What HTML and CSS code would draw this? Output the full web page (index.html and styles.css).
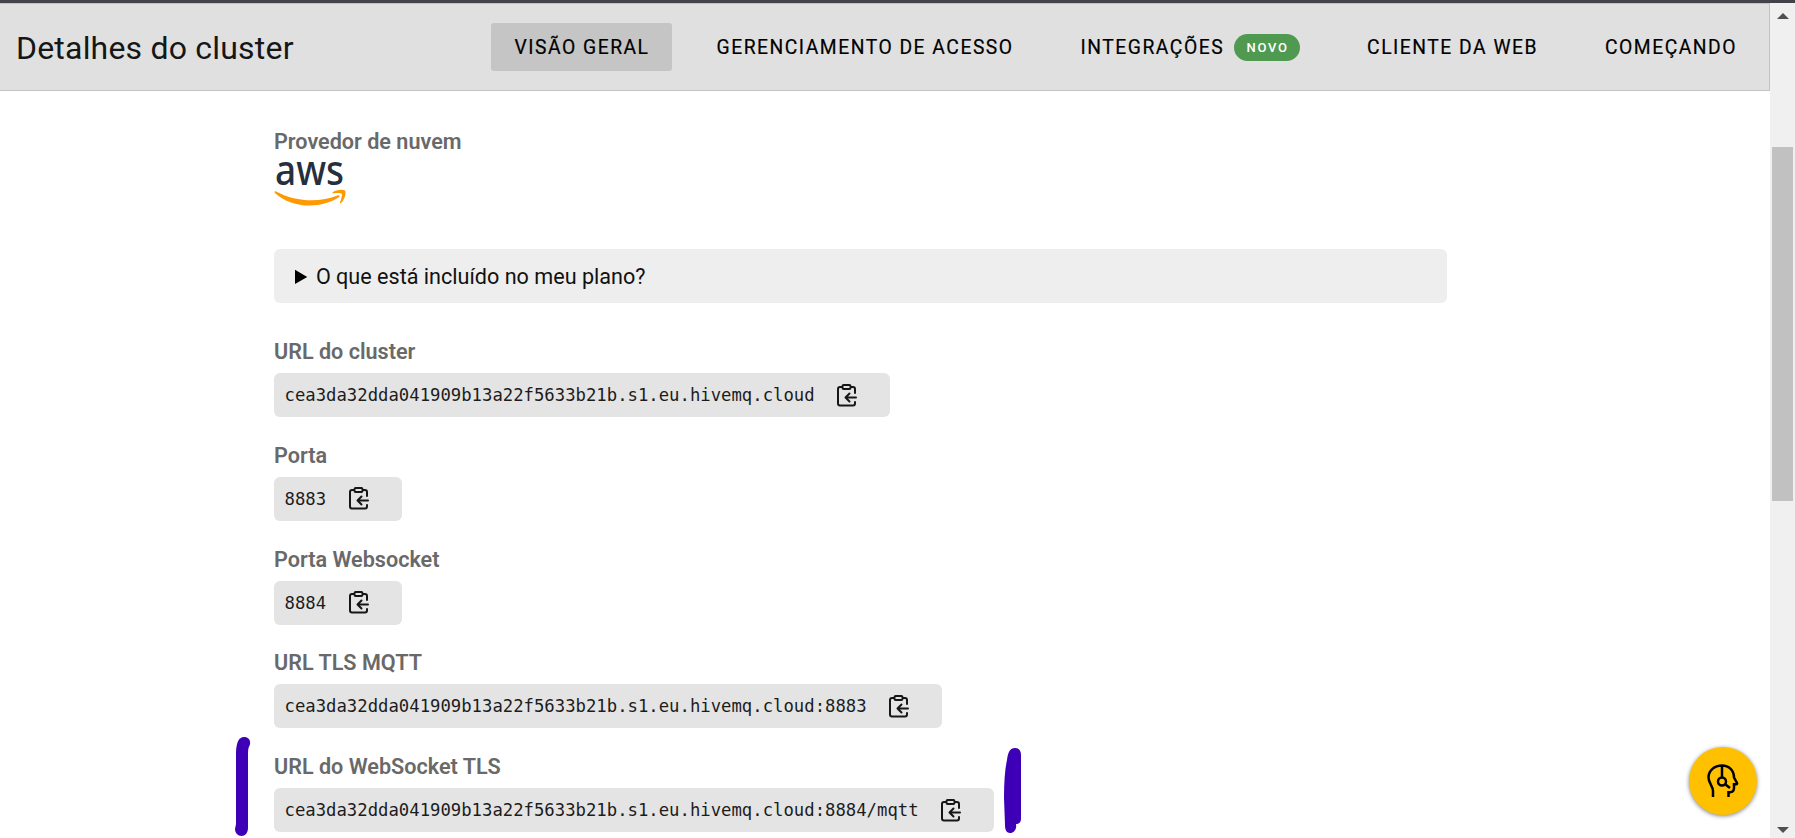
FILE: index.html
```html
<!DOCTYPE html>
<html lang="pt">
<head>
<meta charset="utf-8">
<title>Detalhes do cluster</title>
<link rel="stylesheet" href="styles.css">
</head>
<body>
<svg width="0" height="0" class="defs">
  <symbol id="copy" viewBox="0 0 20 23">
    <g fill="none" stroke="#161616" stroke-width="2" stroke-linecap="round" stroke-linejoin="round">
      <path d="M5 3H3a2 2 0 0 0-2 2v14.500a2 2 0 0 0 2 2h13a2 2 0 0 0 2-2V18M14 3h2a2 2 0 0 1 2 2v4"/>
      <rect x="5.500" y="1" width="8" height="4" rx="1.200"/>
      <path d="M19 13.500H8.500M12.500 9.500l-4 4 4 4"/>
    </g>
  </symbol>
</svg>
<div class="edge"></div>
<div class="shell">
  <div class="page">
    <header class="header">
      <h1 class="title">Detalhes do cluster</h1>
      <nav class="nav">
        <a class="tab active"><span>VISÃO GERAL</span></a>
        <a class="tab"><span>GERENCIAMENTO DE ACESSO</span></a>
        <a class="tab"><span>INTEGRAÇÕES</span><span class="badge">NOVO</span></a>
        <a class="tab"><span>CLIENTE DA WEB</span></a>
        <a class="tab"><span>COMEÇANDO</span></a>
      </nav>
    </header>
    <main class="content">
      <h2 class="label provider">Provedor de nuvem</h2>
      <svg class="aws" width="74" height="46" viewBox="0 0 74 46">
        <text x="1" y="23" textLength="69" lengthAdjust="spacingAndGlyphs">aws</text>
        <path fill="#ff9900" d="M.5 30c0-.8.800-1 1.500-.5C22 40 45 41 64 33.300c1.500-.6 2.300.8 1 1.800C48 47 18 47 .9 31z"/>
        <path fill="#ff9900" d="M58.500 30.500c3-2.600 9.500-3.300 12.500-2 1.500 2-.3 9.500-4 12.600-.8.500-1.400.100-1-.8 1.200-3 2.600-7.600 1.800-8.600-1-1.200-5.600-.7-8.600-.4-.8.100-1.300-.3-.7-.8z"/>
      </svg>
      <details class="plan"><summary><span class="question">O que está incluído no meu plano?</span></summary></details>
      <section class="field"><h2 class="label">URL do cluster</h2>
        <div class="value"><code>cea3da32dda041909b13a22f5633b21b.s1.eu.hivemq.cloud</code><svg class="copy"><use href="#copy"/></svg></div></section>
      <section class="field"><h2 class="label">Porta</h2>
        <div class="value"><code>8883</code><svg class="copy"><use href="#copy"/></svg></div></section>
      <section class="field"><h2 class="label">Porta Websocket</h2>
        <div class="value"><code>8884</code><svg class="copy"><use href="#copy"/></svg></div></section>
      <section class="field"><h2 class="label">URL TLS MQTT</h2>
        <div class="value"><code>cea3da32dda041909b13a22f5633b21b.s1.eu.hivemq.cloud:8883</code><svg class="copy"><use href="#copy"/></svg></div></section>
      <section class="field"><h2 class="label">URL do WebSocket TLS</h2>
        <div class="value"><code>cea3da32dda041909b13a22f5633b21b.s1.eu.hivemq.cloud:8884/mqtt</code><svg class="copy"><use href="#copy"/></svg></div></section>
    </main>
  </div>
  <div class="scrollbar">
    <svg class="arrow" width="12" height="6"><path d="M0 6 6 0l6 6z"/></svg>
    <div class="thumb"></div>
    <svg class="arrow down" width="12" height="6"><path d="M0 0l6 6 6-6z"/></svg>
  </div>
</div>
<svg class="mark left" width="16" height="100" viewBox="0 0 16 100"><path d="M1 15C1.500 5 4 0 9 0c5 0 7 4 5.800 8-1.800 3-1.800 6-1.800 10v73c0 5-3 8-6.500 8S0 96 0 92l1-5z"/></svg>
<svg class="mark right" width="17" height="85" viewBox="0 0 17 85"><path d="M3 12C4 4 6 0 11 0c4 0 6 3 6 7v64c0 3-2 5-5 5 1 5-2 9-6 9s-5-4-5-8L0 50Q0 25 3 12z"/></svg>
<button class="fab" aria-label="Suporte">
  <svg width="32" height="34" viewBox="0 0 32 34" fill="none" stroke="#000" stroke-width="2.500">
    <path d="M6 33v-6C6 22 1.500 19 1.500 13.500 1.500 6.500 7.500 1.500 15 1.500c7 0 12 5 12 12l3 5.500c.3.700 0 1.200-.8 1.200H27V24c0 3-1.500 4.200-4 4.200h-1.500V33"/>
    <path d="M15 2v11M18.500 20.500l4.500 3.500"/><circle cx="15" cy="17.500" r="4"/>
  </svg>
</button>
</body>
</html>
```
FILE: styles.css
```css
* { box-sizing: border-box; }
body { margin: 0; height: 838px; overflow: hidden; background: #fff; color: #000; font-family: Roboto, sans-serif; display: flex; flex-direction: column; }
.defs { position: absolute; }
.edge { height: 3px; background: #42424a; flex: none; }
.shell { display: flex; height: 835px; }
.page { flex: 1; min-width: 0; overflow: hidden; }
.header { height: 88px; background: #e0e0e0; border: 1px solid #c3c3c3; border-left: 0; display: flex; align-items: center; justify-content: space-between; padding: 0 10px 0 16px; }
.title { margin: 2px 0 0; font-size: 32px; font-weight: 400; letter-spacing: .2px; color: #161616; white-space: nowrap; }
.nav { display: flex; gap: 22px; }
.tab { height: 48px; padding: 0 22px 0 23px; display: flex; align-items: center; border-radius: 3px; font-size: 19.300px; font-weight: 400; letter-spacing: 1.510px; white-space: nowrap; -webkit-text-stroke: .2px #000; }
.active { background: #c5c5c5; }
.badge { margin-left: 10px; height: 27px; width: 66px; border-radius: 14px; background: #4f9a50; color: #fff; -webkit-text-stroke: 0; font-size: 13px; font-weight: 500; letter-spacing: 1.700px; line-height: 27px; text-align: center; padding-left: 1px; }
.content { padding: 35px 0 0 274px; }
.label { margin: 0; font-size: 21.600px; line-height: 34px; font-weight: 600; color: #696969; }
.provider { line-height: 32px; }
.aws { display: block; margin-top: 4px; overflow: visible; }
.aws text { font: 500 41px "Noto Sans", sans-serif; fill: #252f3e; }
.plan { margin-top: 41px; width: 1173px; height: 54px; background: #eee; border-radius: 6px; padding: 0 21px; font-size: 21.600px; line-height: 55px; }
.question { margin-left: -2px; color: #111; }
.field { margin-top: 21.800px; height: 82px; }
.plan + .field { margin-top: 32px; }
.value { margin-top: 4px; height: 44px; display: inline-flex; align-items: center; background: #e4e4e4; border-radius: 6px; padding: 0 33px 0 10.500px; vertical-align: top; }
.value code { font: 17.270px "DejaVu Sans Mono", monospace; color: #1c1c1c; }
.copy { width: 20px; height: 23px; margin-left: 22.500px; }
.scrollbar { width: 25px; background: #f0f0f0; display: flex; flex-direction: column; align-items: center; padding: 10px 0 5px; }
.arrow { fill: #505050; flex: none; }
.thumb { width: 21px; height: 354px; margin-top: 128px; background: #c1c1c1; }
.down { margin-top: auto; }
.mark { position: absolute; fill: #3e00b7; }
.left { left: 235px; top: 737px; }
.right { left: 1004px; top: 748px; }
.fab { position: absolute; left: 1689px; top: 747px; width: 68px; height: 68px; border: 0; border-radius: 50%; background: #ffc000; display: flex; align-items: center; justify-content: center; padding: 0; box-shadow: 0 1px 4px rgba(0,0,0,.5); }
```
